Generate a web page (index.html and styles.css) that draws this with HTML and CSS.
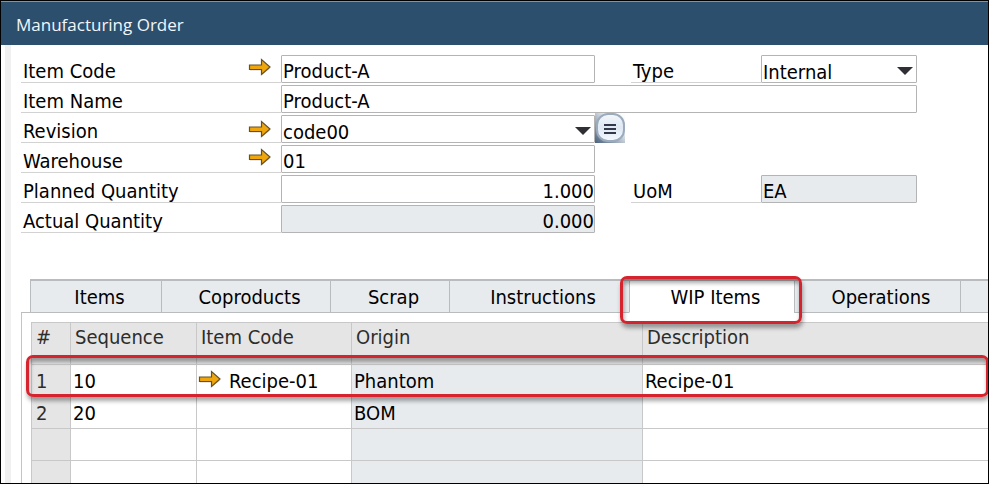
FILE: index.html
```html
<!DOCTYPE html>
<html lang="en">
<head>
  <meta charset="UTF-8">
  <meta name="viewport" content="width=device-width, initial-scale=1.0">
  <title>Manufacturing Order</title>
  <link rel="stylesheet" href="styles.css">
</head>
<body>
  <svg width="0" height="0" class="defs">
    <symbol id="arrow" viewBox="0 0 24 18">
      <path d="M2 7.5H14V2L22 9.5L14 16V11.5H2Z" fill="#777" opacity=".35" transform="translate(0 1)"/>
      <path d="M1.500 7H13.500V1.500L22 9L13.500 16.500V11.500H1.500Z" fill="#eea60c" stroke="#665125" stroke-width="1.2"/>
    </symbol>
  </svg>

  <div class="window">
    <h1 class="titlebar">Manufacturing Order</h1>

    <div class="content">
      <form class="fields">
        <div class="label"><label for="itemCode">Item Code</label><svg class="arrow"><use href="#arrow"/></svg></div>
        <input class="field" id="itemCode" value="Product-A">
        <div class="label second"><label for="type">Type</label></div>
        <div class="dropdown">
          <select class="field" id="type"><option>Internal</option></select>
        </div>

        <div class="label"><label for="itemName">Item Name</label></div>
        <input class="field wide" id="itemName" value="Product-A">

        <div class="label"><label for="revision">Revision</label><svg class="arrow low"><use href="#arrow"/></svg></div>
        <div class="dropdown">
          <select class="field" id="revision"><option>code00</option></select>
        </div>
        <button type="button" class="list-btn" aria-label="Revision list">
          <svg width="30" height="30" viewBox="0 0 30 30">
            <defs>
              <linearGradient id="corner" x1="0" y1="1" x2="1" y2="0">
                <stop offset="0" stop-color="#49607c"/>
                <stop offset=".4" stop-color="#a5b2c0"/>
                <stop offset=".7" stop-color="#f0f2f5"/>
                <stop offset="1" stop-color="#fff"/>
              </linearGradient>
              <linearGradient id="face" x1="0" y1="0" x2="0" y2="1">
                <stop offset="0" stop-color="#f4f7fb"/>
                <stop offset=".5" stop-color="#dfe8f3"/>
                <stop offset="1" stop-color="#f4f9fe"/>
              </linearGradient>
            </defs>
            <rect width="30" height="30" fill="url(#corner)"/>
            <rect x="2" y="1" width="27" height="27" rx="11" fill="url(#face)" stroke="#9aabbd" stroke-width="2"/>
            <path d="M9 12H21M9 16H21M9 20H21" stroke="#33384a" stroke-width="2"/>
          </svg>
        </button>

        <div class="label"><label for="warehouse">Warehouse</label><svg class="arrow"><use href="#arrow"/></svg></div>
        <input class="field" id="warehouse" value="01">

        <div class="label"><label for="planned">Planned Quantity</label></div>
        <input class="field number" id="planned" value="1.000">
        <div class="label second"><label for="uom">UoM</label></div>
        <input class="field" id="uom" value="EA" readonly>

        <div class="label"><label for="actual">Actual Quantity</label></div>
        <input class="field number" id="actual" value="0.000" readonly>
      </form>

      <div class="tabs">
        <button type="button" class="tab">Items</button>
        <button type="button" class="tab">Coproducts</button>
        <button type="button" class="tab">Scrap</button>
        <button type="button" class="tab">Instructions</button>
        <button type="button" class="tab active">WIP Items<span class="callout tab-callout"></span></button>
        <button type="button" class="tab">Operations</button>
        <button type="button" class="tab" aria-label="More"></button>
      </div>

      <div class="panel">
        <table>
          <colgroup>
            <col class="col-num">
            <col class="col-seq">
            <col class="col-code">
            <col class="col-origin">
            <col>
          </colgroup>
          <thead>
            <tr><th>#</th><th>Sequence</th><th>Item Code</th><th>Origin</th><th>Description</th></tr>
          </thead>
          <tbody>
            <tr class="marked">
              <td>1<span class="callout row-callout"></span></td>
              <td>10</td>
              <td><div class="linked"><svg class="arrow"><use href="#arrow"/></svg>Recipe-01</div></td>
              <td>Phantom</td>
              <td>Recipe-01</td>
            </tr>
            <tr><td>2</td><td>20</td><td></td><td>BOM</td><td></td></tr>
            <tr><td></td><td></td><td></td><td></td><td></td></tr>
            <tr class="last"><td></td><td></td><td></td><td></td><td></td></tr>
          </tbody>
        </table>
      </div>
    </div>
  </div>
</body>
</html>
```
FILE: styles.css
```css
* {
  box-sizing: border-box;
}
body {
  margin: 0;
  background: #fff;
  color: #000;
  font-family: "DejaVu Sans Condensed", "Noto Sans", sans-serif;
  font-size: 20px;
}
input, select, button {
  font: inherit;
  color: inherit;
}
.defs {
  position: absolute;
}
.window {
  min-height: 100vh;
  border: 1px solid #000;
  overflow: hidden;
  display: flex;
  flex-direction: column;
}
.titlebar {
  margin: 0;
  height: 44px;
  padding-left: 15px;
  border-top: 1px solid #a98b6c;
  background: #2b4f6d;
  color: #f2f6fa;
  font: 17px/46px "Open Sans", "Noto Sans", sans-serif;
}
.content {
  flex: 1;
  display: flex;
  flex-direction: column;
  margin-left: 4px;
  padding: 10px 0 0 10px;
  border-left: 6px solid #f0f0f0;
}

/* header fields */
.fields {
  display: grid;
  grid-template-columns: 260px 314px 36px 130px 156px;
  grid-auto-rows: 28px;
  row-gap: 2px;
}
.label {
  grid-column: 1;
  display: flex;
  justify-content: space-between;
  padding: 0 9px 0 2px;
  border-bottom: 1px solid #d2d2d2;
  line-height: 32px;
}
.label.second {
  grid-column: 4;
}
.arrow {
  width: 24px;
  height: 18px;
  margin-top: 3px;
  flex: none;
}
.arrow.low {
  margin-top: 5px;
}
.field {
  width: 100%;
  min-width: 0;
  height: 28px;
  padding: 4px 0 0 1px;
  border: 1px solid #b4b4b4;
  border-radius: 1px;
  background: #fff;
  outline: none;
}
.field[readonly] {
  background: #e7ebee;
}
.field.wide {
  grid-column: 2 / 6;
}
.field.number {
  text-align: right;
}
.dropdown {
  position: relative;
}
.dropdown select {
  appearance: none;
}
.dropdown::after {
  content: "";
  position: absolute;
  right: 4px;
  top: 12px;
  border: 8px solid transparent;
  border-top-color: #303034;
  border-bottom: 0;
  pointer-events: none;
}
.list-btn {
  width: 30px;
  height: 30px;
  margin-top: -2px;
  padding: 0;
  border: 0;
  background: none;
}
.list-btn svg {
  display: block;
}

/* tabs */
.tabs {
  display: grid;
  grid-template-columns: 131px 169px 119px 180px 165px 166px 1fr;
  margin-top: 46px;
  padding-left: 9px;
  border-bottom: 1px solid #bcbcbc;
}
.tab {
  position: relative;
  height: 34px;
  margin-bottom: -1px;
  padding: 0 0 0 7px;
  border: solid #b9bcbe;
  border-width: 2px 0 1px 1px;
  background: #e7ebee;
}
.tab.active {
  background: #fff;
  border-bottom-color: #fff;
  z-index: 1;
}
.callout {
  position: absolute;
  border: 3px solid #d5242d;
  border-radius: 7px;
  box-shadow: 1px 4px 4px rgba(0, 0, 0, .35), inset 1px 4px 4px rgba(0, 0, 0, .35);
  pointer-events: none;
}
.tab-callout {
  inset: -5px -8px -12px -10px;
}

/* grid */
.panel {
  flex: 1;
  padding: 9px 0 0 9px;
  border-left: 1px solid #c4c4c4;
}
table {
  width: 100%;
  table-layout: fixed;
  border-collapse: collapse;
}
.col-num {
  width: 39px;
}
.col-seq {
  width: 126px;
}
.col-code {
  width: 155px;
}
.col-origin {
  width: 291px;
}
th, td {
  height: 32px;
  padding: 0 0 0 2px;
  border: 1px solid #c8c8c8;
  line-height: 24px;
  text-align: left;
}
th {
  height: 42px;
  padding: 0 0 13px 4px;
  background: #e5e5e5;
  color: #2d2d2d;
  font-weight: normal;
}
td:first-child {
  padding-left: 4px;
  background: #e5e5e5;
  color: #2d2d2d;
}
td:nth-child(4) {
  background: #e7ebee;
}
th:last-child, td:last-child {
  border-right: 0;
}
.marked {
  position: relative;
}
.marked td {
  border-bottom-color: transparent;
}
.row-callout {
  inset: -10px -1px 0 -6px;
}
.linked {
  display: flex;
  gap: 7px;
  margin-left: -1px;
}
.linked .arrow {
  margin-top: 1px;
}
.last td {
  height: 22px;
  border-bottom: 0;
}
```
